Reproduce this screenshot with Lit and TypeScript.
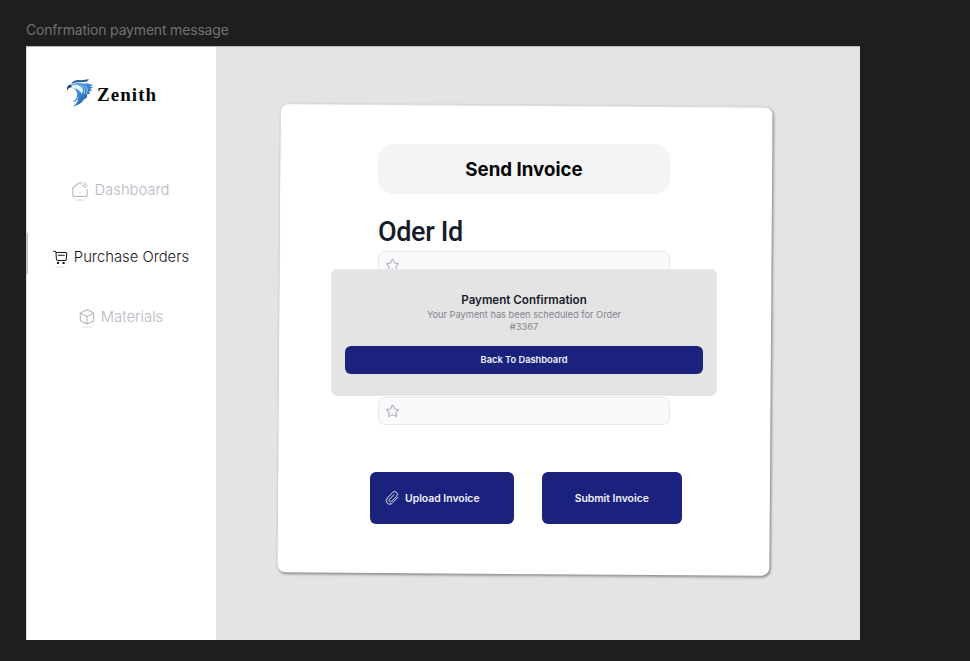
import { LitElement, html, svg, css } from "lit";
import { customElement, property } from "lit/decorators.js";

const star = html`<svg class="star" viewBox="0 0 24 24" fill="none" stroke="#a9aab8" stroke-width="1.800" stroke-linejoin="round"><path d="M12 2q.5 0 .8.700L15.300 8q.2.400.600.500l5.500.9q1.100.3.300 1.200L18 14.300q-.3.300-.2.800l.8 5.300q0 1.200-1.100.8L12.600 18.600q-.6-.3-1.200 0L6.500 21.200q-1.100.4-1.100-.8l.8-5.300q.1-.5-.2-.8L2.300 10.600q-.8-.9.3-1.200L8.100 8.500q.4-.1.600-.5L11.200 2.700Q11.500 2 12 2z"/></svg>`;

const clip = html`<svg class="clip" viewBox="0 0 24 24" fill="none" stroke="#e6e7f5" stroke-width="1.7" stroke-linecap="round" stroke-linejoin="round"><path d="M22.500 10.500l-9.600 9.800a6 6 0 0 1-8.900 0.500 6.200 6.200 0 0 1 0-8.800l9.300-9.600a4.600 4.600 0 0 1 6.600 0 4.600 4.600 0 0 1 0 6.500L11.300 17.700a2.500 2.500 0 0 1-3.600 0 2.500 2.500 0 0 1 0-3.600l7.600-7.700"/></svg>`;

const icons: Record<string, unknown> = {
  dashboard: svg`<path d="M10 1.200Q8.200.2 6.800 1.200L1.800 5Q.8 5.800.8 7v5.500q0 2 2 2h10.400q2 0 2-2V7.500"/><path d="M8 10v1.500" stroke-width=".7"/><path d="M13 1q.2 2.300 2.500 2.500Q13.200 3.700 13 6q-.2-2.300-2.500-2.500Q12.800 3.300 13 1z" stroke-width=".8"/>`,
  cart: svg`<path d="M.7 1.300h1.500q1 .1 1 1.100l.4 7q.1 1.800 1.800 1.800h7.200q1.500 0 1.600-1.500l.4-5.500q.1-1.500-1.400-1.500H3.300M5.600 5.500h6.500"/><g fill="currentColor"><circle cx="5.300" cy="13.800" r=".7"/><circle cx="11.300" cy="13.800" r=".7"/></g>`,
  box: svg`<path d="M8 .8l5.800 2.800q.9.500.9 1.500v5.700q0 1-.9 1.500L8 15l-5.800-2.700q-.9-.5-.9-1.500V5.100q0-1 .9-1.500zM1.700 4.200 8 7.500l6.300-3.300M8 7.500V15"/>`,
};

@customElement("nav-item")
class NavItem extends LitElement {
  @property() icon = "box";
  @property() label = "";
  @property({ type: Boolean, reflect: true }) active = false;

  static styles = css`
    :host { display: flex; height: 41px; align-items: center; justify-content: center; gap: 6px; color: #b6b7bf; box-sizing: border-box; border-left: 2px solid transparent; padding: 0 2px 0 0; }
    :host([active]) { color: #17171c; border-left-color: #c3c5d0; padding-top: 6px; }
    .icon { display: flex; flex-direction: column; align-items: center; margin-top: 4px; }
    .icon::after { content: ""; width: 12px; height: 2px; border-radius: 50%; background: rgba(0, 0, 0, 0.07); filter: blur(0.5px); margin-top: 1px; }
    svg { width: 16px; height: 16px; }
    :host([active]) svg { width: 15px; height: 15px; }
    span { font: 300 14.800px/20px Inter, sans-serif; white-space: nowrap; }
  `;

  render() {
    return html`<div class="icon"><svg viewBox="0 0 16 16" fill="none" stroke="currentColor" stroke-width="1.1" stroke-linecap="round" stroke-linejoin="round">${icons[this.icon]}</svg></div><span>${this.label}</span>`;
  }
}

@customElement("app-root")
class AppRoot extends LitElement {
  static styles = css`
    :host { display: block; box-sizing: border-box; width: 970px; height: 661px; padding: 19px 0 0 26px; background: #1e1e1e; overflow: hidden; font-family: Inter, sans-serif; }
    * { box-sizing: border-box; }
    .caption { height: 27px; font-size: 14px; letter-spacing: -0.180px; line-height: 21px; color: #717171; }
    .frame { display: flex; width: 834px; height: 594px; background: #e4e4e4; border-top: 1px solid #b9b9b9; }
    aside { width: 190px; background: #fff; border-left: 1px solid #d8d8d8; display: flex; flex-direction: column; }
    .brand { display: flex; align-items: center; height: 32px; margin: 30px 0 80px 39px; gap: 3px; }
    .brand svg { width: 28px; height: 30px; }
    .brand span { font: 700 19px/24px "Liberation Serif", serif; letter-spacing: 1.050px; color: #050505; padding-top: 3px; }
    nav { display: flex; flex-direction: column; margin-left: -1px; }
    nav-item:nth-child(1) { margin-top: -20px; }
    nav-item:nth-child(2) { margin-top: 23px; }
    nav-item:nth-child(3) { margin-top: 22px; }
    main { flex: 1; padding: 58px 0 0 63px; }
    .card { position: relative; width: 492px; height: 469px; padding: 39px 0 0 99px; }
    .card::before { content: ""; position: absolute; inset: 0 1px 0 -0.500px; border-radius: 8px; background: #fff; transform: rotate(0.4deg); box-shadow: 1px 1.500px 2.500px 0.500px rgba(0, 0, 0, 0.36), inset 0 1px 1px rgba(0, 0, 0, 0.14); }
    .card > * { position: relative; }
    h1 { margin: 0; width: 292px; height: 50px; border-radius: 15px; background: #f4f4f4; font-size: 18.700px; line-height: 51px; font-weight: 700; text-align: center; color: #050505; }
    h2 { margin: 20px 0 3px; font: 500 27px/36px Roboto, sans-serif; letter-spacing: -0.350px; color: #151b2b; height: 34px; }
    .field { width: 292px; height: 28px; border: 1px solid #e6e8ee; border-radius: 7px; background: #f8fafc; padding: 6px; }
    .star { display: block; width: 15px; height: 14px; }
    .second { margin-top: 118px; }
    .actions { display: flex; gap: 28px; margin: 47px 0 0 -8px; }
    button { border: 0; border-radius: 6px; background: #1a227e; color: #f0f1fa; font: 600 10.400px Inter, sans-serif; padding: 0; }
    .actions button { width: 139.500px; height: 52px; display: flex; align-items: center; justify-content: center; }
    .actions .upload { width: 144px; justify-content: flex-start; padding-left: 15px; gap: 6px; }
    .clip { width: 14px; height: 14px; }
    .card > .modal { position: absolute; left: 52px; top: 164px; width: 386px; height: 127px; border: 1px solid #eaeaea; border-radius: 6px; background: #e4e4e4; padding: 22px 13px 0; text-align: center; }
    .modal h3 { margin: 0; font-size: 11.600px; line-height: 17px; font-weight: 600; color: #171b2b; }
    .modal p { margin: 0 auto 12.500px; width: 210px; font-size: 9.280px; line-height: 12px; color: #82848f; }
    .modal button { display: block; width: 100%; height: 28px; font-size: 9.300px; }
  `;

  render() {
    return html`
      <div class="caption">Confrmation payment message</div>
      <div class="frame">
        <aside>
          <div class="brand">
            <svg viewBox="0 0 28 30">
              <defs><linearGradient id="b" x1="0" y1="0" x2="1" y2="1"><stop offset="0" stop-color="#77b4e6"/><stop offset=".5" stop-color="#3c87d0"/><stop offset="1" stop-color="#0d3690"/></linearGradient></defs>
              <path fill="url(#b)" d="M3 7.500Q8 4.500 13 5q5 .5 9 .5l5 1.500-3 1.500 3 1-3 1.500 2 1.500-3 1 1 2-3 1 0 3-3 2q-3 5-11 7 5-4 5-7-3 2.500-5 2.500 5-4.500 4-9-1-4-5-5-3-1-5-.5z"/>
              <path fill="#e6f2fb" d="M4 8.500q4-2.500 8-1.500 4 1.500 5 5l-1 4q-3-5-7-5.500-3 0-5-.5z"/>
              <path fill="#214d80" d="M1 12.500Q.5 7 4.500 6.500L6 9 3 10z"/>
              <path fill="#2a5b93" d="M5 6Q7 2 13 2q5 .5 10-1l-2 2.500q-4 1-8 .8-4-.2-8 1.700z"/>
              <path d="M15 7q5 3 3 9M19 8q4 3 1 8M12 19q-1 4-4 7" fill="none" stroke="#b9dcf5" stroke-width=".8"/>
            </svg>
            <span>Zenith</span>
          </div>
          <nav>
            <nav-item icon="dashboard" label="Dashboard"></nav-item>
            <nav-item icon="cart" label="Purchase Orders" active></nav-item>
            <nav-item icon="box" label="Materials"></nav-item>
          </nav>
        </aside>
        <main>
          <section class="card">
            <h1>Send Invoice</h1>
            <h2>Oder Id</h2>
            <div class="field">${star}</div>
            <div class="field second">${star}</div>
            <div class="actions">
              <button class="upload">${clip}<span>Upload Invoice</span></button>
              <button>Submit Invoice</button>
            </div>
            <div class="modal">
              <h3>Payment Confirmation</h3>
              <p>Your Payment has been scheduled for Order #3367</p>
              <button>Back To Dashboard</button>
            </div>
          </section>
        </main>
      </div>
    `;
  }
}
